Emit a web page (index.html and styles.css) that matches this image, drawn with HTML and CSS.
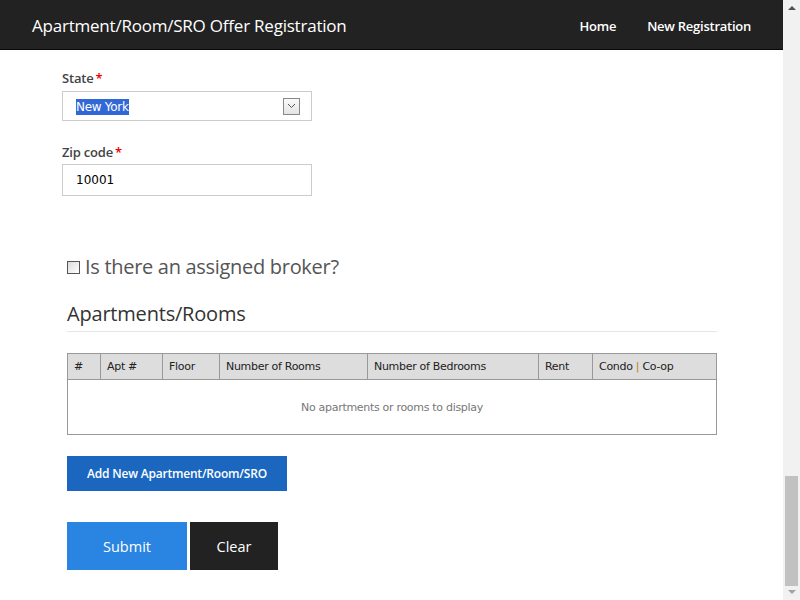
FILE: index.html
```html
<!DOCTYPE html>
<html>
<head>
<meta charset="utf-8">
<link rel="stylesheet" href="styles.css">
</head>
<body>
<div class="page">
  <header class="navbar">
    <div class="brand">Apartment/Room/SRO Offer Registration</div>
    <nav class="nav">
      <a class="nav-link">Home</a>
      <a class="nav-link">New Registration</a>
    </nav>
  </header>
  <main class="content">
    <div class="field">
      <label class="label">State<span class="req">*</span></label>
      <div class="select">
        <span class="sel-text">New York</span>
        <span class="sel-arrow">
          <svg width="9" height="6" viewBox="0 0 9 6"><path d="M1 1 L4.5 4.5 L8 1" fill="none" stroke="#555" stroke-width="1"/></svg>
        </span>
      </div>
    </div>
    <div class="field field-zip">
      <label class="label">Zip code<span class="req">*</span></label>
      <div class="input">10001</div>
    </div>
    <div class="broker">
      <input type="checkbox" class="check">
      <span class="broker-text">Is there an assigned broker?</span>
    </div>
    <h3 class="section-title">Apartments/Rooms</h3>
    <table class="grid">
      <thead>
        <tr>
          <th class="c1">#</th>
          <th class="c2">Apt #</th>
          <th class="c3">Floor</th>
          <th class="c4">Number of Rooms</th>
          <th class="c5">Number of Bedrooms</th>
          <th class="c6">Rent</th>
          <th class="c7">Condo <span class="pipe">|</span> Co-op</th>
        </tr>
      </thead>
      <tbody>
        <tr><td colspan="7" class="empty">No apartments or rooms to display</td></tr>
      </tbody>
    </table>
    <button class="btn-add">Add New Apartment/Room/SRO</button>
    <div class="actions">
      <button class="btn-submit">Submit</button>
      <button class="btn-clear">Clear</button>
    </div>
  </main>
</div>
<div class="scrollbar">
  <div class="arrow-up"></div>
  <div class="track"><div class="thumb"></div></div>
  <div class="arrow-down"></div>
</div>
</body>
</html>
```

FILE: styles.css
```css
html, body {
  margin: 0;
  padding: 0;
  height: 600px;
  overflow: hidden;
}
body {
  display: flex;
  font-family: "Open Sans", "Noto Sans", sans-serif;
  background: #fff;
}
.page {
  flex: 1;
  min-width: 0;
}
.navbar {
  height: 50px;
  box-sizing: border-box;
  background: #222;
  border-bottom: 1px solid #080808;
  display: flex;
  align-items: center;
  justify-content: space-between;
  padding: 2px 32px 0 32px;
}
.brand {
  color: #fff;
  font-size: 17px;
  letter-spacing: -0.22px;
}
.nav {
  display: flex;
  gap: 31px;
}
.nav-link {
  color: #fff;
  font-size: 13px;
  font-weight: 600;
  letter-spacing: -0.25px;
}
.content {
  padding: 19px 0 0 62px;
}
.field {
  display: flex;
  flex-direction: column;
  align-items: flex-start;
}
.label {
  font-size: 13px;
  font-weight: 600;
  color: #444;
  line-height: 18px;
  letter-spacing: -0.2px;
  margin-bottom: 4px;
}
.req {
  color: #e00;
  margin-left: 2px;
}
.select, .input {
  width: 250px;
  box-sizing: border-box;
  border: 1px solid #ccc;
  display: flex;
  align-items: center;
  padding-left: 13px;
  color: #000;
  font-family: "DejaVu Sans", sans-serif;
  font-size: 12px;
}
.select {
  height: 30px;
  justify-content: space-between;
  padding-right: 11px;
  padding-top: 2px;
}
.sel-text {
  background: #3168d5;
  color: #fff;
  padding: 1px 0;
  letter-spacing: -0.3px;
}
.sel-arrow {
  width: 15px;
  height: 15px;
  margin-top: -2px;
  border: 1px solid #888;
  background: linear-gradient(#fafafa, #e4e4e4);
  display: flex;
  align-items: center;
  justify-content: center;
}
.field-zip {
  margin-top: 22px;
}
.field-zip .label {
  margin-bottom: 3px;
}
.input {
  height: 32px;
}
.broker {
  margin-top: 57px;
  margin-left: 5px;
  display: flex;
  align-items: center;
  height: 26px;
}
.check {
  appearance: none;
  -webkit-appearance: none;
  width: 13px;
  height: 13px;
  margin: 3px 5px 0 0;
  border: 1px solid #555;
  background: linear-gradient(135deg, #dcdcdc, #fff);
  box-sizing: border-box;
}
.broker-text {
  font-size: 20px;
  color: #555;
  letter-spacing: -0.3px;
}
.section-title {
  margin: 19px 0 0 5px;
  width: 650px;
  font-size: 20px;
  font-weight: 400;
  color: #333;
  line-height: 32px;
  padding-bottom: 1px;
  border-bottom: 1px solid #e6e6e6;
  letter-spacing: -0.2px;
}
.grid {
  margin: 21px 0 0 5px;
  width: 650px;
  border-collapse: collapse;
  border: 1px solid #999;
  font-family: "DejaVu Sans", sans-serif;
  font-size: 11px;
  letter-spacing: -0.3px;
}
.grid th {
  background: #ddd;
  height: 26px;
  box-sizing: border-box;
  padding: 0 6px;
  text-align: left;
  font-weight: 400;
  color: #222;
  border: 1px solid #999;
}
.c1 { width: 33px; }
.c2 { width: 62px; }
.c3 { width: 57px; }
.c4 { width: 148px; }
.c5 { width: 171px; }
.c6 { width: 54px; }
.pipe { color: #c08020; }
.empty {
  height: 52px;
  text-align: center;
  color: #777;
  font-size: 11px;
}
button {
  border: none;
  color: #fff;
  font-family: "Open Sans", "Noto Sans", sans-serif;
  padding: 0;
  display: block;
}
.btn-add {
  margin: 21px 0 0 5px;
  width: 220px;
  height: 35px;
  background: #1b67bf;
  font-size: 12px;
  font-weight: 600;
  letter-spacing: -0.2px;
}
.actions {
  display: flex;
  gap: 3px;
  margin: 31px 0 0 5px;
}
.btn-submit {
  width: 120px;
  height: 48px;
  background: #2a84e2;
  font-size: 14.5px;
}
.btn-clear {
  width: 88px;
  height: 48px;
  background: #222;
  font-size: 14.5px;
}
.scrollbar {
  width: 17px;
  height: 600px;
  background: #f1f1f1;
  display: flex;
  flex-direction: column;
  align-items: center;
}
.arrow-up {
  margin-top: 6px;
  width: 0;
  height: 0;
  border-left: 4px solid transparent;
  border-right: 4px solid transparent;
  border-bottom: 4px solid #505050;
}
.track {
  flex: 1;
  width: 100%;
  display: flex;
  flex-direction: column;
  justify-content: flex-end;
  align-items: center;
  padding-bottom: 4px;
}
.thumb {
  width: 13px;
  height: 110px;
  background: #c1c1c1;
}
.arrow-down {
  margin-bottom: 6px;
  width: 0;
  height: 0;
  border-left: 4px solid transparent;
  border-right: 4px solid transparent;
  border-top: 4px solid #a3a3a3;
}
```
